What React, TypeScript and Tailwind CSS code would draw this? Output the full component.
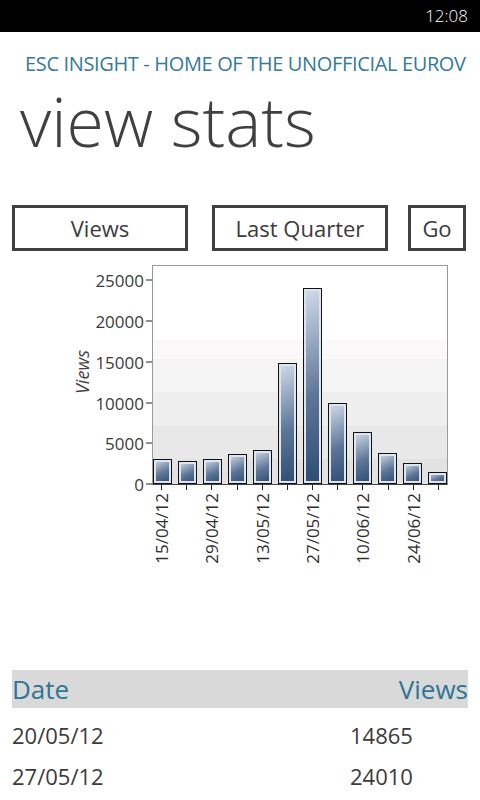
const bars = [3060, 2820, 3060, 3640, 4130, 14865, 24010, 9900, 6340, 3770, 2580, 1470];
const labels = ["15/04/12", "", "29/04/12", "", "13/05/12", "", "27/05/12", "", "10/06/12", "", "24/06/12", ""];
const yTicks = [25000, 20000, 15000, 10000, 5000, 0];

// px per view, taken from the 24010 bar
const SCALE = 0.00815;
const PLOT_H = 219;

const rows = [
  { date: "20/05/12", views: 14865 },
  { date: "27/05/12", views: 24010 },
];

function App() {
  return (
    <div className="h-[800px] w-[480px] overflow-hidden bg-white font-['Open_Sans',sans-serif] text-[#3b3b3b]">
      <div className="flex h-[32px] items-center justify-end bg-black pr-[12px] text-[17px] font-light text-white">
        12:08
      </div>

      <div className="mt-[20px] whitespace-nowrap pl-[25px] text-[20px] leading-[24px] tracking-[-0.35px] text-[#347a99]">
        ESC INSIGHT - HOME OF THE UNOFFICIAL EUROV
      </div>

      <h1 className="mt-[11px] h-[68px] pl-[20px] text-[68px] font-light leading-none text-[#404040]">
        view stats
      </h1>

      <div className="mt-[50px] flex h-[46px] px-[12px]">
        <button className="w-[176px] border-[3px] border-[#404040] text-[22px] font-medium text-[#3b3b3b]">Views</button>
        <button className="ml-[24px] w-[176px] border-[3px] border-[#404040] text-[22px] font-medium text-[#3b3b3b]">
          Last Quarter
        </button>
        <button className="ml-[20px] w-[58px] border-[3px] border-[#404040] text-[22px] font-medium text-[#3b3b3b]">
          Go
        </button>
      </div>

      <div className="mt-[14px] flex h-[405px]">
        <div className="relative h-[220px] w-[152px]">
          <span className="absolute left-[82px] top-[107px] -translate-x-1/2 -translate-y-1/2 -rotate-90 text-[18px] italic text-[#444]">
            Views
          </span>
          {yTicks.map((v) => (
            <div
              key={v}
              className="absolute right-0 flex -translate-y-1/2 items-center"
              style={{ top: PLOT_H - v * SCALE }}
            >
              <span className="text-[17px] leading-none text-[#3b3b3b]">{v}</span>
              <span className="ml-[2px] h-px w-[6px] bg-[#222]" />
            </div>
          ))}
        </div>

        <div className="w-[296px]">
          <div className="flex h-[220px] items-end justify-between border border-[#9a9a9a] border-b-[#444] bg-[linear-gradient(to_bottom,#ffffff_0%,#ffffff_34%,#fbf8fa_34%,#fbf8fa_42.5%,#f6f5f6_42.5%,#f6f5f6_58%,#efeeef_58%,#efeeef_73.5%,#e9e8e9_73.5%,#e9e8e9_88.6%,#e3e2e3_88.6%)]">
            {bars.map((v, i) => (
              <div
                key={i}
                className="w-[19px] border border-[#111] bg-[linear-gradient(155deg,#d2dcea,#5d7697_55%,#2c4b73)] shadow-[inset_0_0_0_2px_#dfe5ee]"
                style={{ height: Math.round(v * SCALE) }}
              />
            ))}
          </div>
          <div className="flex justify-between">
            {bars.map((_, i) => (
              <div key={i} className="flex w-[19px] flex-col items-center">
                <span className="h-[5px] w-px bg-[#222]" />
                {labels[i] && (
                  <span className="mt-[3px] rotate-180 text-[17px] leading-[19px] text-[#2e2e2e] [writing-mode:vertical-rl]">
                    {labels[i]}
                  </span>
                )}
              </div>
            ))}
          </div>
        </div>
      </div>

      <div className="mx-[12px]">
        <div className="flex h-[38px] items-center justify-between bg-[#d9d9d9] text-[26px] leading-none text-[#2f7595]">
          <span>Date</span>
          <span>Views</span>
        </div>
        <div className="pt-[7px]">
          {rows.map((r) => (
            <div key={r.date} className="grid h-[41px] grid-cols-[338px_1fr] items-center text-[22px] text-[#3b3b3b]">
              <span>{r.date}</span>
              <span>{r.views}</span>
            </div>
          ))}
        </div>
      </div>
    </div>
  );
}

export default App;
